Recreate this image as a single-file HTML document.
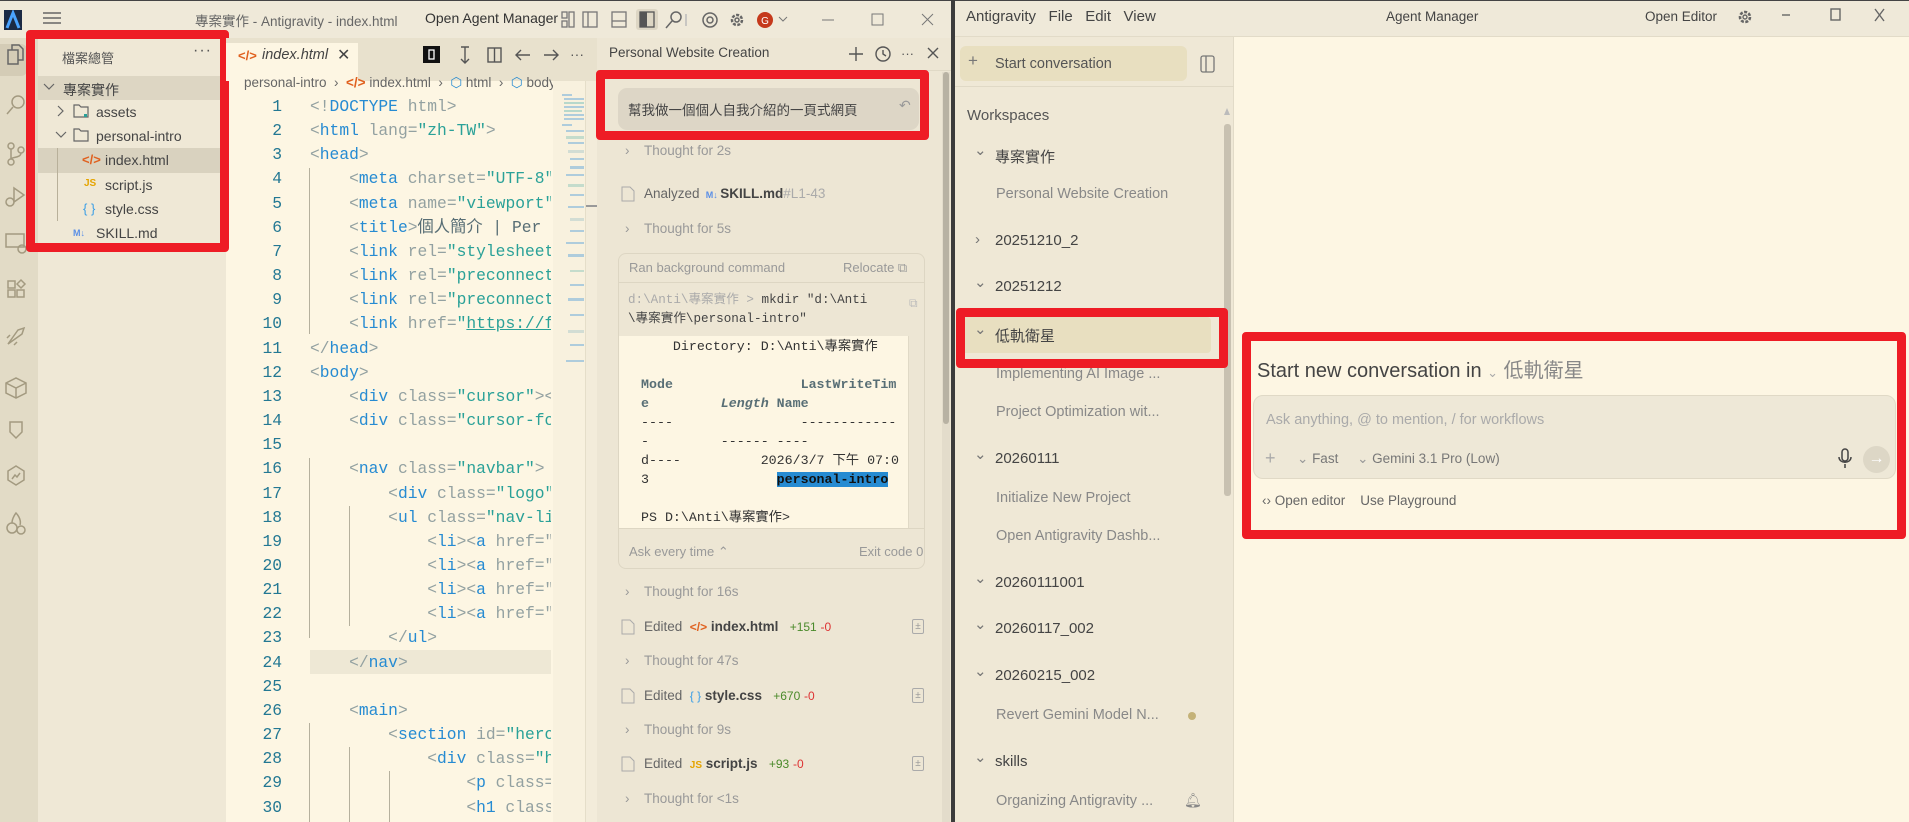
<!DOCTYPE html>
<html style="width:1909px;height:822px;overflow:hidden"><head><meta charset="utf-8">
<style>
*{margin:0;padding:0;box-sizing:border-box}
body{width:1909px;height:822px;overflow:hidden;position:relative;background:#fdf6e3;font-family:"Liberation Sans","Noto Sans CJK TC",sans-serif;color:#555}
.a{position:absolute;white-space:nowrap}
.mono{font-family:"Liberation Mono","Noto Sans CJK TC",monospace}
.red{position:absolute;border:9px solid #ee1c25;border-radius:4px}
.t{color:#268bd2}.p{color:#93a1a1}.s{color:#2aa198}
.code{white-space:normal}
.code div{height:24.17px;line-height:24.17px;white-space:pre;overflow:hidden}
.ln{position:absolute;left:240px;width:42px;text-align:right;color:#237893;font-family:"Liberation Mono",monospace;font-size:16.3px}
.ln div{height:24.17px;line-height:24.17px}
.ic{stroke:#a39a80;fill:none;stroke-width:1.5}
</style></head><body>

<!-- ===== LEFT WINDOW ===== -->
<div class="a" style="left:0;top:0;width:955px;height:38px;background:#efe9d9;border-top:1px solid #444"></div>
<svg class="a" style="left:4px;top:10px" width="18" height="20"><rect width="18" height="20" fill="#1b2a44"/><path d="M3 18 L9 3 L15 18" stroke="#4aa3ff" stroke-width="3" fill="none"/></svg>
<svg class="a" style="left:42px;top:10px" width="20" height="16"><path d="M1 3h18M1 8h18M1 13h18" stroke="#666" stroke-width="1.5"/></svg>
<div class="a" style="left:195px;top:10px;font-size:13.5px;color:#666">專案實作 - Antigravity - index.html</div>
<div class="a" style="left:425px;top:10px;font-size:14px;color:#333">Open Agent Manager</div>
<svg class="a" style="left:560px;top:9px" width="390" height="22">
<g stroke="#777" fill="none" stroke-width="1.3"><rect x="2" y="3" width="5" height="6"/><rect x="2" y="12" width="5" height="6"/><rect x="9" y="3" width="5" height="15"/>
<rect x="23" y="3" width="14" height="15"/><path d="M28 3v15"/>
<rect x="52" y="3" width="14" height="15"/><path d="M52 12h14"/></g>
<rect x="76" y="0" width="22" height="21" rx="3" fill="#ddd6c4"/><rect x="80" y="3" width="14" height="15" fill="none" stroke="#555" stroke-width="1.3"/><rect x="80" y="3" width="7" height="15" fill="#555"/>
<g stroke="#666" fill="none" stroke-width="1.5"><circle cx="116" cy="8" r="5"/><path d="M112 12 L106 19"/><path d="M126 5v12" stroke="#bbb"/>
<circle cx="150" cy="11" r="7"/><circle cx="150" cy="11" r="3"/>
<circle cx="177" cy="11" r="5" stroke-dasharray="3 1.5" stroke-width="2.5"/><circle cx="177" cy="11" r="2"/></g>
<circle cx="205" cy="11" r="8" fill="#c5391b"/><text x="205" y="15" font-size="10" fill="#fff" text-anchor="middle" font-family="Liberation Sans">G</text>
<path d="M219 8l4 4 4-4" stroke="#777" fill="none"/>
<path d="M262 11h12" stroke="#777"/><rect x="312" y="5" width="11" height="11" stroke="#777" fill="none"/><path d="M362 5l11 11M373 5l-11 11" stroke="#777"/>
</svg>

<!-- activity bar -->
<div class="a" style="left:0;top:38px;width:38px;height:784px;background:#e2dbc6"></div>
<div class="a" style="left:0;top:44px;width:27px;height:32px;background:#d4ccb6;border-radius:0 6px 6px 0"></div>
<svg class="a" style="left:0;top:38px" width="38" height="500">
<g class="ic"><rect x="8" y="12" width="10" height="14" stroke="#666"/><path d="M12 12V7h7l4 4v11h-5" stroke="#666"/>
<circle cx="18" cy="64" r="6"/><path d="M13 69l-6 7"/>
<circle cx="11" cy="108" r="3"/><circle cx="11" cy="124" r="3"/><circle cx="21" cy="112" r="3"/><path d="M11 111v10M21 115c0 5-10 4-10 6"/>
<path d="M14 150l10 7-10 7z"/><circle cx="10" cy="164" r="4"/>
<rect x="6" y="196" width="18" height="13"/><circle cx="22" cy="211" r="4"/>
<rect x="8" y="243" width="7" height="7"/><rect x="8" y="252" width="7" height="7"/><rect x="17" y="252" width="7" height="7"/><path d="M17 246l4-4 4 4-4 4z"/>
<path d="M8 306l10-14 6-2-2 6-14 10zM10 297l-3 3M17 304l-3 3"/>
<path d="M6 345l10-5 10 5v10l-10 5-10-5zM6 345l10 5 10-5M16 350v10"/>
<path d="M10 384h12v10l-6 6-6-6z"/>
<path d="M16 428l8 5v9l-8 5-8-5v-9zM12 441l3-4 2 2 3-4"/>
<circle cx="12" cy="490" r="5"/><path d="M12 485c0-5 4-10 4-10s6 6 4 12"/><circle cx="21" cy="492" r="4"/></g>
</svg>

<!-- explorer -->
<div class="a" style="left:38px;top:38px;width:188px;height:784px;background:#efe8d6"></div>
<div class="a" style="left:62px;top:48px;font-size:13px;color:#555">檔案總管</div>
<div class="a" style="left:193px;top:42px;font-size:16px;color:#555;letter-spacing:1px">···</div>
<div class="a" style="left:38px;top:76px;width:188px;height:24px;background:#ddd6c3"></div>
<div class="a" style="left:38px;top:148px;width:188px;height:25px;background:#d9d2bf"></div>
<div class="a" style="left:57px;top:148px;width:1px;height:73px;background:#b8b09a"></div>
<svg class="a" style="left:40px;top:76px" width="60" height="170"><g stroke="#666" fill="none" stroke-width="1.2">
<path d="M4 8l5 5 5-5"/><path d="M18 30l5 5-5 5"/><path d="M16 56l5 5 5-5"/>
<path d="M34 29h5l2 2h7v10h-14z"/><path d="M34 53h5l2 2h7v10h-14z"/></g>
<rect x="44" y="38" width="3" height="3" fill="#2aa198"/></svg>
<div class="a" style="left:63px;top:80px;font-size:14px;color:#444">專案實作</div>
<div class="a" style="left:96px;top:104px;font-size:14px;color:#444">assets</div>
<div class="a" style="left:96px;top:128px;font-size:14px;color:#444">personal-intro</div>
<div class="a" style="left:82px;top:152px;font-size:13px;color:#e0601e;font-weight:bold">&lt;/&gt;</div>
<div class="a" style="left:105px;top:152px;font-size:14px;color:#444">index.html</div>
<div class="a" style="left:84px;top:178px;font-size:10px;color:#e5a400;font-weight:bold">JS</div>
<div class="a" style="left:105px;top:177px;font-size:14px;color:#444">script.js</div>
<div class="a" style="left:83px;top:201px;font-size:13px;color:#3a9ee6">{ }</div>
<div class="a" style="left:105px;top:201px;font-size:14px;color:#444">style.css</div>
<div class="a" style="left:73px;top:228px;font-size:9px;color:#5b8fe6;font-weight:bold">M↓</div>
<div class="a" style="left:96px;top:225px;font-size:14px;color:#444">SKILL.md</div>
<div class="red" style="left:26px;top:30px;width:203px;height:222px"></div>

<!-- editor -->
<div class="a" style="left:226px;top:38px;width:371px;height:43px;background:#e8e1cd"></div>
<div class="a" style="left:226px;top:43px;width:132px;height:38px;background:#fdf6e3"></div>
<div class="a" style="left:238px;top:48px;font-size:13px;color:#e0601e;font-weight:bold">&lt;/&gt;</div>
<div class="a" style="left:262px;top:47px;font-size:14.5px;color:#444;font-style:italic">index.html</div>
<div class="a" style="left:337px;top:45px;font-size:16px;color:#444">✕</div>
<svg class="a" style="left:420px;top:44px" width="170" height="24"><rect x="3" y="2" width="17" height="17" fill="#111"/><rect x="9" y="6" width="5" height="9" fill="none" stroke="#fff" stroke-width="1.3"/>
<g stroke="#555" fill="none" stroke-width="1.4"><path d="M41 3h8M45 3v16M41 15l4 4 4-4"/><rect x="68" y="4" width="13" height="14"/><path d="M74.5 4v14"/><path d="M110 11h-14M101 6l-5 5 5 5"/><path d="M124 11h14M133 6l5 5-5 5"/></g>
<text x="150" y="15" font-size="14" fill="#555">···</text></svg>
<div class="a" style="left:244px;top:75px;width:309px;overflow:hidden;font-size:13.5px;color:#666">personal-intro&nbsp;&nbsp;›&nbsp;&nbsp;<span style="color:#e0601e;font-weight:bold">&lt;/&gt;</span> index.html&nbsp;&nbsp;›&nbsp;&nbsp;<span style="color:#268bd2">⬡</span> html&nbsp;&nbsp;›&nbsp;&nbsp;<span style="color:#268bd2">⬡</span> body&nbsp;&nbsp;›</div>
<div class="a" style="left:310px;top:650px;width:241px;height:24px;background:#eee8d5"></div>
<div class="a" style="left:309px;top:168px;width:1px;height:166px;background:#b5b09d"></div>
<div class="a" style="left:309px;top:458px;width:1px;height:180px;background:#b5b09d"></div>
<div class="a" style="left:349px;top:506px;width:1px;height:120px;background:#b5b09d"></div>
<div class="a" style="left:309px;top:723px;width:1px;height:99px;background:#b5b09d"></div>
<div class="a" style="left:349px;top:747px;width:1px;height:75px;background:#b5b09d"></div>
<div class="a" style="left:389px;top:771px;width:1px;height:51px;background:#b5b09d"></div>
<div class="ln" style="top:95px"><div>1</div><div>2</div><div>3</div><div>4</div><div>5</div><div>6</div><div>7</div><div>8</div><div>9</div><div>10</div><div>11</div><div>12</div><div>13</div><div>14</div><div>15</div><div>16</div><div>17</div><div>18</div><div>19</div><div>20</div><div>21</div><div>22</div><div>23</div><div>24</div><div>25</div><div>26</div><div>27</div><div>28</div><div>29</div><div>30</div></div>
<div class="a mono code" style="left:310px;top:95px;width:241px;overflow:hidden;font-size:16.3px;color:#586e75"><div><span class="p">&lt;!</span><span class="t">DOCTYPE</span><span class="p"> html&gt;</span></div><div><span class="p">&lt;</span><span class="t">html</span><span class="p"> lang=</span><span class="s">"zh-TW"</span><span class="p">&gt;</span></div><div><span class="p">&lt;</span><span class="t">head</span><span class="p">&gt;</span></div><div>    <span class="p">&lt;</span><span class="t">meta</span><span class="p"> charset=</span><span class="s">"UTF-8"</span></div><div>    <span class="p">&lt;</span><span class="t">meta</span><span class="p"> name=</span><span class="s">"viewport"</span></div><div>    <span class="p">&lt;</span><span class="t">title</span><span class="p">&gt;</span>個人簡介 | Per</div><div>    <span class="p">&lt;</span><span class="t">link</span><span class="p"> rel=</span><span class="s">"stylesheet"</span></div><div>    <span class="p">&lt;</span><span class="t">link</span><span class="p"> rel=</span><span class="s">"preconnect"</span></div><div>    <span class="p">&lt;</span><span class="t">link</span><span class="p"> rel=</span><span class="s">"preconnect"</span></div><div>    <span class="p">&lt;</span><span class="t">link</span><span class="p"> href=</span><span class="s">"<u>https://f</u></span></div><div><span class="p">&lt;/</span><span class="t">head</span><span class="p">&gt;</span></div><div><span class="p">&lt;</span><span class="t">body</span><span class="p">&gt;</span></div><div>    <span class="p">&lt;</span><span class="t">div</span><span class="p"> class=</span><span class="s">"cursor"</span><span class="p">&gt;&lt;</span></div><div>    <span class="p">&lt;</span><span class="t">div</span><span class="p"> class=</span><span class="s">"cursor-fol</span></div><div> </div><div>    <span class="p">&lt;</span><span class="t">nav</span><span class="p"> class=</span><span class="s">"navbar"</span><span class="p">&gt;</span></div><div>        <span class="p">&lt;</span><span class="t">div</span><span class="p"> class=</span><span class="s">"logo"</span></div><div>        <span class="p">&lt;</span><span class="t">ul</span><span class="p"> class=</span><span class="s">"nav-li</span></div><div>            <span class="p">&lt;</span><span class="t">li</span><span class="p">&gt;&lt;</span><span class="t">a</span><span class="p"> href="</span></div><div>            <span class="p">&lt;</span><span class="t">li</span><span class="p">&gt;&lt;</span><span class="t">a</span><span class="p"> href="</span></div><div>            <span class="p">&lt;</span><span class="t">li</span><span class="p">&gt;&lt;</span><span class="t">a</span><span class="p"> href="</span></div><div>            <span class="p">&lt;</span><span class="t">li</span><span class="p">&gt;&lt;</span><span class="t">a</span><span class="p"> href="</span></div><div>        <span class="p">&lt;/</span><span class="t">ul</span><span class="p">&gt;</span></div><div>    <span class="p">&lt;/</span><span class="t">nav</span><span class="p">&gt;</span></div><div> </div><div>    <span class="p">&lt;</span><span class="t">main</span><span class="p">&gt;</span></div><div>        <span class="p">&lt;</span><span class="t">section</span><span class="p"> id=</span><span class="s">"hero"</span></div><div>            <span class="p">&lt;</span><span class="t">div</span><span class="p"> class=</span><span class="s">"h</span></div><div>                <span class="p">&lt;</span><span class="t">p</span><span class="p"> class=</span></div><div>                <span class="p">&lt;</span><span class="t">h1</span><span class="p"> class</span></div></div>
<!-- minimap -->
<div class="a" style="left:553px;top:81px;width:33px;height:741px;background:#f8f1de"></div>
<svg class="a" style="left:560px;top:94px" width="26" height="280"><g fill="#9cc3dc" opacity=".8">
<rect x="2" y="0" width="10" height="2"/><rect x="4" y="4" width="20" height="2"/><rect x="4" y="8" width="20" height="2" fill="#a7d2c8"/><rect x="4" y="12" width="20" height="2"/><rect x="4" y="16" width="18" height="2" fill="#a7d2c8"/><rect x="4" y="20" width="20" height="2"/><rect x="4" y="24" width="20" height="2"/><rect x="2" y="30" width="10" height="2"/><rect x="6" y="36" width="18" height="2"/><rect x="6" y="42" width="18" height="3" fill="#b8d8c8"/><rect x="8" y="48" width="16" height="2"/><rect x="8" y="56" width="16" height="3" fill="#c9d9d2"/><rect x="10" y="64" width="14" height="2"/><rect x="10" y="72" width="14" height="3"/><rect x="6" y="80" width="18" height="2"/><rect x="8" y="90" width="16" height="3" fill="#b8d8c8"/><rect x="10" y="100" width="14" height="2"/><rect x="8" y="112" width="16" height="2"/><rect x="10" y="124" width="14" height="3" fill="#c9d9d2"/><rect x="10" y="136" width="14" height="2"/><rect x="6" y="148" width="18" height="2"/><rect x="8" y="160" width="16" height="3"/><rect x="10" y="176" width="14" height="2" fill="#b8d8c8"/><rect x="10" y="190" width="14" height="2"/><rect x="8" y="204" width="16" height="3"/><rect x="10" y="220" width="14" height="2"/><rect x="8" y="236" width="16" height="3" fill="#c9d9d2"/><rect x="10" y="250" width="14" height="2"/><rect x="6" y="266" width="18" height="2"/></g></svg>
<div class="a" style="left:585px;top:81px;width:12px;height:741px;background:#f3ecda;border-left:1px solid #e5dec9"></div>
<div class="a" style="left:586px;top:205px;width:11px;height:2px;background:#999"></div>

<!-- agent panel -->
<div class="a" style="left:597px;top:38px;width:356px;height:784px;background:#ede6d4"></div>
<div class="a" style="left:609px;top:45px;font-size:13.5px;color:#444">Personal Website Creation</div>
<svg class="a" style="left:845px;top:44px" width="100" height="20"><g stroke="#555" fill="none" stroke-width="1.4"><path d="M11 3v14M4 10h14"/><circle cx="38" cy="10" r="7"/><path d="M38 6v4l3 2"/><path d="M83 4l10 10M93 4l-10 10"/></g><text x="56" y="14" font-size="13" fill="#555">···</text></svg>
<div class="a" style="left:597px;top:70px;width:356px;height:1px;background:#e0d9c6"></div>
<div class="a" style="left:618px;top:88px;width:301px;height:42px;background:#ddd6c6;border-radius:9px"></div>
<div class="a" style="left:628px;top:99px;font-size:13.5px;color:#444">幫我做一個個人自我介紹的一頁式網頁</div>
<div class="a" style="left:899px;top:97px;font-size:14px;color:#999">↶</div>
<div class="red" style="left:596px;top:70px;width:333px;height:70px"></div>
<div class="a" style="font-size:13.5px;color:#999;left:625px;top:143px">›</div>
<div class="a" style="font-size:13.5px;color:#999;left:644px;top:143px">Thought for 2s</div>
<svg class="a" style="left:621px;top:186px" width="14" height="16"><path d="M1 1h8l4 4v10H1z" stroke="#aaa" fill="none"/></svg>
<div class="a" style="font-size:13.5px;color:#666;left:644px;top:186px">Analyzed <span style="font-size:9px;color:#5b8fe6;font-weight:bold">&nbsp;M↓&nbsp;</span><span style="color:#444;font-weight:bold">SKILL.md</span><span style="color:#aaa">#L1-43</span></div>
<div class="a" style="font-size:13.5px;color:#999;left:625px;top:221px">›</div>
<div class="a" style="font-size:13.5px;color:#999;left:644px;top:221px">Thought for 5s</div>
<!-- command box -->
<div class="a" style="left:618px;top:253px;width:307px;height:316px;border:1px solid #ddd6c3;border-radius:8px;background:#ede6d4;overflow:hidden">
 <div class="a" style="left:10px;top:6px;font-size:13px;color:#999">Ran background command</div>
 <div class="a" style="left:224px;top:6px;font-size:13px;color:#999">Relocate ⧉</div>
 <div class="a" style="left:0;top:28px;width:307px;height:1px;background:#ddd6c3"></div>
 <div class="a mono" style="left:9px;top:37px;font-size:12.6px;line-height:19px;color:#444;white-space:pre"><span style="color:#aaa">d:\Anti\專案實作 &gt; </span>mkdir "d:\Anti
\專案實作\personal-intro"</div>
 <div class="a" style="left:290px;top:42px;font-size:12px;color:#bbb">⧉</div>
 <div class="a" style="left:0;top:82px;width:290px;height:192px;background:#fdf6e3"></div>
 <div class="a" style="left:289px;top:82px;width:1px;height:192px;background:#e0d9c6"></div>
 <div class="a mono" style="left:22px;top:83px;width:268px;overflow:hidden;font-size:13.3px;line-height:19px;color:#333;white-space:pre">    Directory: D:\Anti\專案實作

<b style="color:#586e75">Mode                LastWriteTim</b>
<b style="color:#586e75">e         <i>Length</i> Name</b>
----                ------------
-         ------ ----
d----          2026/3/7 下午 07:0
3                <b style="background:#268bd2;color:#111">personal-intro</b>

PS D:\Anti\專案實作&gt;</div>
 <div class="a" style="left:0;top:274px;width:307px;height:1px;background:#ddd6c3"></div>
 <div class="a" style="left:10px;top:290px;font-size:13px;color:#999">Ask every time ⌃</div>
 <div class="a" style="left:240px;top:290px;font-size:13px;color:#999">Exit code 0</div>
</div>
<div class="a" style="font-size:13.5px;color:#999;left:625px;top:584px">›</div>
<div class="a" style="font-size:13.5px;color:#999;left:644px;top:584px">Thought for 16s</div>
<svg class="a" style="left:621px;top:619px" width="14" height="16"><path d="M1 1h8l4 4v10H1z" stroke="#aaa" fill="none"/></svg>
<div class="a" style="font-size:13.5px;color:#666;left:644px;top:619px">Edited&nbsp; <span style="color:#e0601e;font-weight:bold;font-size:12px">&lt;/&gt;</span> <b style="color:#444">index.html</b> &nbsp; <span style="color:#4a8a2a;font-size:12px">+151</span> <span style="color:#d33;font-size:12px">-0</span></div>
<div class="a" style="left:912px;top:619px;width:12px;height:15px;border:1px solid #aaa;border-radius:2px;font-size:10px;color:#999;text-align:center;line-height:13px">±</div>
<div class="a" style="font-size:13.5px;color:#999;left:625px;top:653px">›</div>
<div class="a" style="font-size:13.5px;color:#999;left:644px;top:653px">Thought for 47s</div>
<svg class="a" style="left:621px;top:688px" width="14" height="16"><path d="M1 1h8l4 4v10H1z" stroke="#aaa" fill="none"/></svg>
<div class="a" style="font-size:13.5px;color:#666;left:644px;top:688px">Edited&nbsp; <span style="color:#3a9ee6;font-size:12px">{ }</span> <b style="color:#444">style.css</b> &nbsp; <span style="color:#4a8a2a;font-size:12px">+670</span> <span style="color:#d33;font-size:12px">-0</span></div>
<div class="a" style="left:912px;top:688px;width:12px;height:15px;border:1px solid #aaa;border-radius:2px;font-size:10px;color:#999;text-align:center;line-height:13px">±</div>
<div class="a" style="font-size:13.5px;color:#999;left:625px;top:722px">›</div>
<div class="a" style="font-size:13.5px;color:#999;left:644px;top:722px">Thought for 9s</div>
<svg class="a" style="left:621px;top:756px" width="14" height="16"><path d="M1 1h8l4 4v10H1z" stroke="#aaa" fill="none"/></svg>
<div class="a" style="font-size:13.5px;color:#666;left:644px;top:756px">Edited&nbsp; <span style="color:#e5a400;font-size:10px;font-weight:bold">JS</span> <b style="color:#444">script.js</b> &nbsp; <span style="color:#4a8a2a;font-size:12px">+93</span> <span style="color:#d33;font-size:12px">-0</span></div>
<div class="a" style="left:912px;top:756px;width:12px;height:15px;border:1px solid #aaa;border-radius:2px;font-size:10px;color:#999;text-align:center;line-height:13px">±</div>
<div class="a" style="font-size:13.5px;color:#999;left:625px;top:791px">›</div>
<div class="a" style="font-size:13.5px;color:#999;left:644px;top:791px">Thought for &lt;1s</div>
<div class="a" style="left:942px;top:72px;width:8px;height:750px;background:#e3dccb"></div>
<div class="a" style="left:943px;top:72px;width:6px;height:352px;background:#b8b2a3;border-radius:3px"></div>
<div class="a" style="left:951px;top:0;width:4px;height:822px;background:#3c3c3c"></div>

<!-- ===== RIGHT WINDOW ===== -->
<div class="a" style="left:955px;top:0;width:954px;height:37px;background:#efe9d9;border-top:1px solid #444;border-bottom:1px solid #e2dbc8"></div>
<div class="a" style="left:966px;top:8px;font-size:15px;color:#444">Antigravity&nbsp;&nbsp; File&nbsp;&nbsp; Edit&nbsp;&nbsp; View</div>
<div class="a" style="left:1386px;top:9px;font-size:13.5px;color:#444">Agent Manager</div>
<div class="a" style="left:1645px;top:9px;font-size:13.5px;color:#444">Open Editor</div>
<svg class="a" style="left:1730px;top:6px" width="175" height="22"><g stroke="#666" fill="none" stroke-width="1.4"><circle cx="15" cy="11" r="5" stroke-dasharray="3 1.5" stroke-width="2.6"/><circle cx="15" cy="11" r="2"/><path d="M52 9h8"/><rect x="101" y="3" width="9" height="11"/><path d="M145 3l9 12M154 3l-9 12"/></g></svg>
<!-- sidebar -->
<div class="a" style="left:955px;top:37px;width:279px;height:785px;background:#efe8d6;border-right:1px solid #e2dbc8"></div>
<div class="a" style="left:960px;top:46px;width:227px;height:35px;background:#e8dfc0;border-radius:6px"></div>
<div class="a" style="left:968px;top:51px;font-size:17px;color:#777">+</div>
<div class="a" style="left:995px;top:56px;font-size:14.5px;color:#555">Start conversation</div>
<svg class="a" style="left:1199px;top:54px" width="18" height="20"><rect x="2" y="2" width="13" height="16" rx="2" stroke="#777" fill="none" stroke-width="1.3"/><path d="M7 2v16" stroke="#777" stroke-width="1.3"/></svg>
<div class="a" style="left:955px;top:86px;width:279px;height:1px;background:#e0d9c6"></div>
<div class="a" style="left:967px;top:107px;font-size:15px;color:#555">Workspaces</div>
<div class="a" style="left:1224px;top:124px;width:7px;height:372px;background:#c8c1b1;border-radius:3px"></div>
<div class="a" style="left:1224px;top:108px;width:0;height:0;border-left:3.5px solid transparent;border-right:3.5px solid transparent;border-bottom:7px solid #bbb"></div>
<div class="a" style="left:960px;top:317px;width:251px;height:36px;background:#e8dfc0;border-radius:4px"></div>
<div class="a" style="font-size:15px;color:#777;left:974px;top:141px">⌄</div><div class="a" style="font-size:15px;color:#444;left:995px;top:146px">專案實作</div>
<div class="a" style="font-size:14.5px;color:#888;left:996px;top:186px">Personal Website Creation</div>
<div class="a" style="font-size:15px;color:#777;left:975px;top:231px">›</div><div class="a" style="font-size:15px;color:#444;left:995px;top:232px">20251210_2</div>
<div class="a" style="font-size:15px;color:#777;left:974px;top:273px">⌄</div><div class="a" style="font-size:15px;color:#444;left:995px;top:278px">20251212</div>
<div class="a" style="font-size:15px;color:#777;left:974px;top:320px">⌄</div><div class="a" style="font-size:15px;color:#444;left:995px;top:325px">低軌衛星</div>
<div class="a" style="font-size:14.5px;color:#888;left:996px;top:366px">Implementing AI Image ...</div>
<div class="a" style="font-size:14.5px;color:#888;left:996px;top:404px">Project Optimization wit...</div>
<div class="a" style="font-size:15px;color:#777;left:974px;top:445px">⌄</div><div class="a" style="font-size:15px;color:#444;left:995px;top:450px">20260111</div>
<div class="a" style="font-size:14.5px;color:#888;left:996px;top:490px">Initialize New Project</div>
<div class="a" style="font-size:14.5px;color:#888;left:996px;top:528px">Open Antigravity Dashb...</div>
<div class="a" style="font-size:15px;color:#777;left:974px;top:569px">⌄</div><div class="a" style="font-size:15px;color:#444;left:995px;top:574px">20260111001</div>
<div class="a" style="font-size:15px;color:#777;left:974px;top:615px">⌄</div><div class="a" style="font-size:15px;color:#444;left:995px;top:620px">20260117_002</div>
<div class="a" style="font-size:15px;color:#777;left:974px;top:662px">⌄</div><div class="a" style="font-size:15px;color:#444;left:995px;top:667px">20260215_002</div>
<div class="a" style="font-size:14.5px;color:#888;left:996px;top:707px">Revert Gemini Model N...</div>
<div class="a" style="left:1188px;top:712px;width:8px;height:8px;border-radius:50%;background:#c4b278"></div>
<div class="a" style="font-size:15px;color:#777;left:974px;top:748px">⌄</div><div class="a" style="font-size:15px;color:#444;left:995px;top:753px">skills</div>
<div class="a" style="font-size:14.5px;color:#888;left:996px;top:793px">Organizing Antigravity ...</div>
<div class="a" style="left:1184px;top:792px;font-size:14px;color:#888">🔔︎</div>
<div class="red" style="left:956px;top:308px;width:272px;height:60px"></div>

<!-- main -->
<div class="a" style="left:1257px;top:354px;font-size:20px;color:#444">Start new conversation in <span style="font-size:13px;color:#aaa">⌄</span> <span style="color:#888">低軌衛星</span></div>
<div class="a" style="left:1253px;top:395px;width:643px;height:84px;background:#eee8d7;border:1px solid #e0d9c6;border-radius:10px"></div>
<div class="a" style="left:1266px;top:412px;font-size:14.5px;color:#aaa">Ask anything, @ to mention, / for workflows</div>
<div class="a" style="left:1265px;top:448px;font-size:18px;color:#aaa">+</div>
<div class="a" style="left:1297px;top:451px;font-size:13.5px;color:#777"><span style="color:#999">⌄</span> Fast&nbsp;&nbsp;&nbsp;&nbsp; <span style="color:#999">⌄</span> Gemini 3.1 Pro (Low)</div>
<svg class="a" style="left:1838px;top:448px" width="14" height="22"><rect x="4" y="1" width="6" height="12" rx="3" stroke="#444" fill="none" stroke-width="1.5"/><path d="M1 9c0 7 12 7 12 0M7 16v4" stroke="#444" fill="none" stroke-width="1.5"/></svg>
<div class="a" style="left:1863px;top:446px;width:27px;height:27px;border-radius:50%;background:#ddd7c6;color:#fff;font-size:16px;text-align:center;line-height:26px">→</div>
<div class="a" style="left:1262px;top:493px;font-size:13.5px;color:#666">‹›&nbsp;Open editor&nbsp;&nbsp;&nbsp; Use Playground</div>
<div class="red" style="left:1242px;top:332px;width:664px;height:207px"></div>
</body></html>
